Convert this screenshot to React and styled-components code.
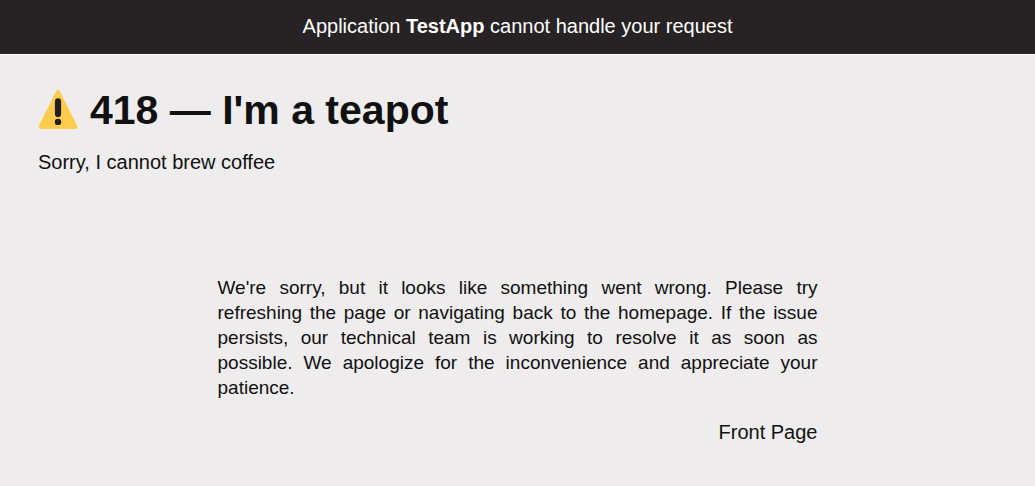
import React from "react";
import styled, { createGlobalStyle } from "styled-components";

const GlobalStyle = createGlobalStyle`
  * { box-sizing: border-box; }
  body {
    margin: 0;
    background: #eeeced;
    color: #111;
    font: 20px/25px "Liberation Sans", Arial, sans-serif;
  }
  h1, p { margin: 0; }
`;

const Banner = styled.header`
  padding: 14px 20px 15px;
  background: #272324;
  border-bottom: 1px solid #fff;
  color: #fff;
  text-align: center;
`;

const Main = styled.main`
  padding: 30px 38px;
`;

const Title = styled.h1`
  display: flex;
  align-items: center;
  gap: 12px;
  font-size: 41px;
  line-height: 50px;
`;

const WarningIcon = styled.svg`
  width: 40px;
  height: 40px;
  flex: none;
`;

const Message = styled.p`
  margin-top: 15px;
`;

const Help = styled.section`
  max-width: 600px;
  margin: 100px auto 0;
`;

const HelpText = styled.p`
  font-size: 19px;
  text-align: justify;
`;

const Actions = styled.nav`
  margin-top: 20px;
  text-align: right;
`;

const PageLink = styled.a`
  color: inherit;
  text-decoration: none;
`;

export default function App() {
  return (
    <>
      <GlobalStyle />
      <Banner>
        Application <strong>TestApp</strong> cannot handle your request
      </Banner>
      <Main>
        <Title>
          <WarningIcon viewBox="0 1 36 36" aria-hidden="true">
            <path fill="#FFCC4D" d="M2.653 36C.811 36-.001 34.662.847 33.027L16.456 1.972c.849-1.635 2.238-1.635 3.087 0l15.609 31.056c.85 1.634.037 2.972-1.805 2.972H2.653z" />
            <path fill="#231F20" d="M15.1 29.7a2.9 2.9 0 1 1 5.8 0a2.9 2.9 0 0 1-5.8 0zM15.2 11.2c0-1.7 1.1-2.8 2.8-2.8s2.8 1.1 2.8 2.8v11.4c0 1.7-1.1 2.8-2.8 2.8s-2.8-1.1-2.8-2.8z" />
          </WarningIcon>
          418 — I'm a teapot
        </Title>
        <Message>Sorry, I cannot brew coffee</Message>
        <Help>
          <HelpText>
            We're sorry, but it looks like something went wrong. Please try
            refreshing the page or navigating back to the homepage. If the issue
            persists, our technical team is working to resolve it as soon as
            possible. We apologize for the inconvenience and appreciate your
            patience.
          </HelpText>
          <Actions>
            <PageLink href="/">Front Page</PageLink>
          </Actions>
        </Help>
      </Main>
    </>
  );
}
